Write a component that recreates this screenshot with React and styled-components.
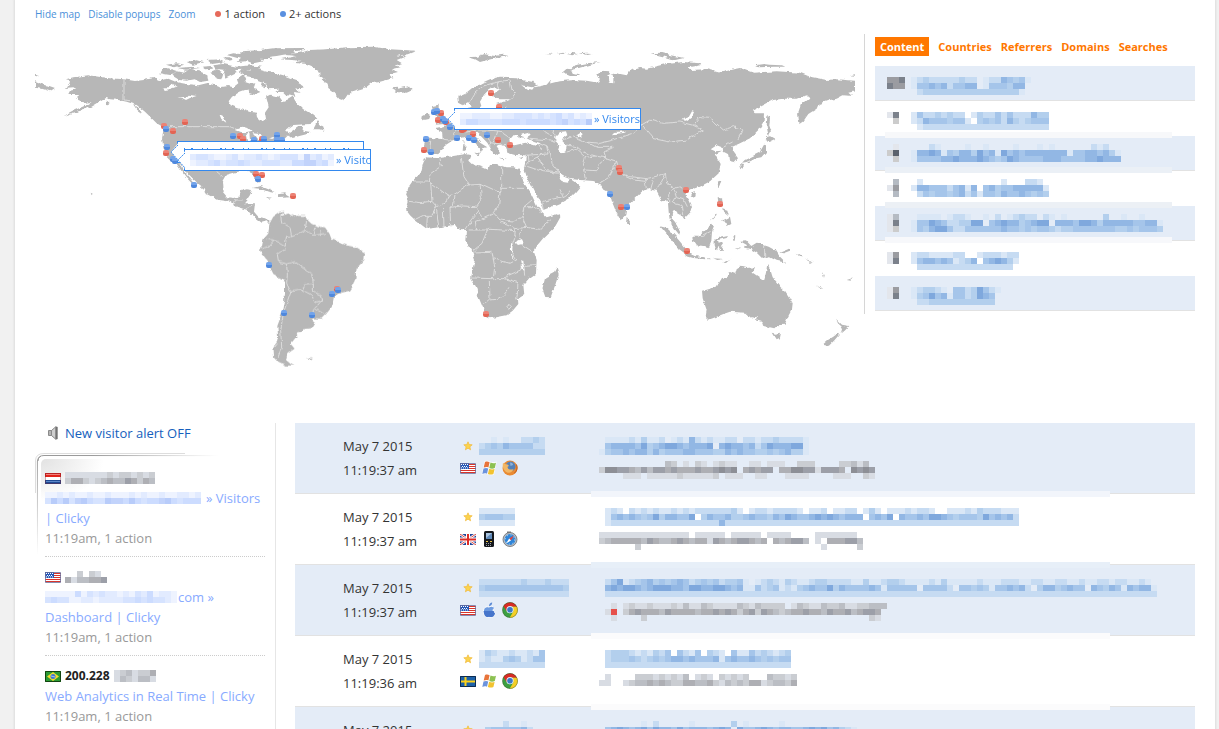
import React from 'react';
import styled, { createGlobalStyle, css } from 'styled-components';

const colors = {
  page: '#f1f1f1',
  surface: '#ffffff',
  band: '#e4ecf7',
  line: '#e2e2e2',
  text: '#333333',
  muted: '#999999',
  link: '#4a90d9',
  linkStrong: '#1560bd',
  linkSoft: '#88aaff',
  accent: '#ff7700',
  popup: '#3388ee',
  land: '#b7b7b7',
  border: '#e4e4e4',
};

const GlobalStyle = createGlobalStyle`
  html {
    scrollbar-width: none;
  }

  body {
    margin: 0;
    background: ${colors.page};
    color: ${colors.text};
    font-family: 'Trebuchet MS', 'Open Sans', sans-serif;
    font-size: 13px;
    line-height: 20px;
  }

  a {
    text-decoration: none;
  }
`;

// Page frame
const Page = styled.main`
  margin: 0 4px 0 15px;
  padding: 0 20px;
  background: ${colors.surface};
  box-shadow: 0 0 2px 1px #dcdcdc;
`;

// Toolbar above the map
const Toolbar = styled.nav`
  display: flex;
  align-items: center;
  gap: 8px;
  padding: 4px 0 10px;
  font-size: 10px;
`;

const ToolLink = styled.a`
  color: ${colors.link};
`;

const Legend = styled.span`
  display: flex;
  align-items: center;
  gap: 3px;
  margin-left: ${({ $first }) => ($first ? '12px' : '7px')};
  font-size: 11px;
`;

const LegendDot = styled.i`
  width: 6px;
  height: 6px;
  border-radius: 3px;
  background: ${({ $red }) => ($red ? '#e66a5b' : '#5a90e0')};
`;

// Map and ranking panel
const Overview = styled.section`
  display: flex;
  align-items: flex-start;
  margin-bottom: 49px;
`;

const MapFrame = styled.div`
  position: relative;
  flex: 1;
  min-width: 0;
`;

const MapSvg = styled.svg`
  display: block;
  width: 100%;
  height: auto;
`;

const Popup = styled.div`
  position: absolute;
  left: ${({ $x }) => ($x / 820) * 100}%;
  top: ${({ $y }) => ($y / 340) * 100}%;
  width: 180px;
  height: 20px;
  display: flex;
  align-items: center;
  gap: 2px;
  padding-left: 5px;
  border: 1px solid ${colors.popup};
  background: ${colors.surface};
  font-size: 11px;
  white-space: nowrap;
`;

const PopupLink = styled.a`
  flex: 1;
  overflow: hidden;
  color: ${colors.popup};
`;

const Pointer = styled.svg`
  position: absolute;
  left: -8px;
  top: -1px;
`;

const Panel = styled.aside`
  width: 320px;
  height: 277px;
  margin-left: 9px;
  padding: 3px 0 0 10px;
  border-left: 1px solid #d6d6d6;
`;

const Tabs = styled.div`
  display: flex;
  gap: 9px;
  margin-bottom: 10px;
`;

const Tab = styled.button`
  border: 0;
  padding: 0;
  background: none;
  color: ${colors.accent};
  font: bold 11px/19px 'Trebuchet MS', 'Open Sans', sans-serif;
  cursor: pointer;

  ${({ $active }) =>
    $active &&
    css`
      padding: 0 5px;
      background: ${colors.accent};
      color: ${colors.surface};
    `}
`;

const RankList = styled.ul`
  margin: 0;
  padding: 0;
  list-style: none;
`;

const RankItem = styled.li`
  position: relative;
  display: flex;
  align-items: center;
  height: 34px;
  padding-left: 12px;
  border-bottom: 1px solid transparent;

  &:nth-child(odd) {
    border-color: ${colors.line};
    background: ${colors.band};
  }

  &::after {
    content: '';
    position: absolute;
    z-index: 1;
    left: 10px;
    right: 23px;
    bottom: -3px;
    height: 6px;
    background: ${({ $smudge }) => $smudge || 'transparent'};
  }
`;

const RankCount = styled.span`
  display: flex;
  width: 24px;
`;

// Lower half: visitor feed and action log
const Activity = styled.section`
  display: flex;
  align-items: stretch;
`;

const Feed = styled.aside`
  box-sizing: border-box;
  flex: 0 0 241px;
  padding: 0 10px;
  border-right: 1px solid #e6e6e6;
`;

const AlertButton = styled.button`
  display: flex;
  align-items: center;
  gap: 4px;
  margin-bottom: 15px;
  padding: 0;
  border: 0;
  background: none;
  color: ${colors.linkStrong};
  font: 13px/20px 'Trebuchet MS', 'Open Sans', sans-serif;
  cursor: pointer;
`;

const Visitor = styled.article`
  position: relative;
  padding: 10px 0 8px;
  border-bottom: 1px dotted #cccccc;
`;

const VisitorGlow = styled.svg`
  position: absolute;
  left: -10px;
  top: -5px;
`;

const VisitorLine = styled.div`
  position: relative;
  display: flex;
  align-items: center;
  gap: ${({ $gap }) => $gap || 5}px;
  height: 20px;
  color: ${colors.muted};
  font-size: 13px;
  white-space: nowrap;
`;

const VisitorLink = styled.a`
  color: ${colors.linkSoft};
`;

const Address = styled.strong`
  color: #222222;
  font-size: 12px;
`;

const Log = styled.table`
  flex: 1;
  align-self: flex-start;
  width: 0;
  margin-left: 19px;
  border-collapse: collapse;
  table-layout: fixed;
`;

const LogRow = styled.tr`
  &:nth-child(odd) {
    background: ${colors.band};
  }
`;

const LogCell = styled.td`
  position: relative;
  width: ${({ $width }) => $width || 'auto'};
  padding: 11px 0 11px ${({ $indent }) => $indent || 0}px;
  border-bottom: 1px solid ${colors.line};
  line-height: 24px;
  vertical-align: top;

  &::after {
    content: '';
    position: absolute;
    z-index: 1;
    left: -8px;
    right: 85px;
    bottom: -4px;
    height: 6px;
    background: ${({ $smudge }) => $smudge || 'transparent'};
  }
`;

const LogLine = styled.div`
  display: flex;
  align-items: center;
  gap: ${({ $star }) => ($star ? 6 : 5)}px;
  height: ${({ $icons }) => ($icons ? 20 : 24)}px;
  padding-left: ${({ $star }) => ($star ? '3px' : 0)};
`;

/* Pixelated stand-in for private text, one digit per 6px cell */
const tones = {
  blue: ['none', '#dae7f6', '#c6dbf2', '#b3cfed', '#a5c5ea', '#92b7e4', '#7fa8dd'],
  grey: ['none', '#d8dce3', '#cacdd2', '#bbbec4', '#aeafb4', '#9c9fa8', '#8d8f96'],
  pale: ['none', '#eef3ff', '#e2ebff', '#d6e3ff', '#ccdcff', '#c2d3fb', '#b8ccfa'],
  dark: ['none', '#e3e6ec', '#cccccc', '#b5bbc3', '#9b9ca1', '#7b818b', '#5c626c'],
};

const MosaicSvg = styled.svg`
  flex: none;
`;

const Mosaic = ({ rows, tone = 'blue', accent }) => (
  <MosaicSvg
    width={rows[0].length * 6}
    height={rows.length * 6}
    shapeRendering="crispEdges"
    aria-hidden="true"
  >
    {rows.map((row, y) =>
      [...row].map((cell, x) =>
        cell === '0' ? null : (
          <rect
            key={`${x}-${y}`}
            x={x * 6}
            y={y * 6}
            width="6"
            height="6"
            fill={cell === 'r' ? accent : tones[tone][cell]}
          />
        )
      )
    )}
  </MosaicSvg>
);

// Flags, 16 x 11
const Flag = ({ country }) => (
  <svg width="16" height="11" viewBox="0 0 16 11" role="img" aria-label={country}>
    {country === 'Netherlands' && (
      <>
        <path fill="#e2231a" d="M0 0h16v4H0z" />
        <path fill="#fff" d="M0 4h16v3H0z" />
        <path fill="#1d4a94" d="M0 7h16v4H0z" />
        <path stroke="#f0827c" d="M1 1.500h14" />
        <path stroke="#5c85c6" d="M1 8.500h14" />
        <path fill="none" stroke="#7a2030" strokeOpacity=".4" d="M.5.5h15v10H.5z" />
      </>
    )}
    {country === 'United States' && (
      <>
        <path fill="#fff" d="M0 0h16v11H0z" />
        <path stroke="#d8352c" d="M0 1.500h16M0 3.500h16M0 5.500h16M0 7.500h16M0 9.500h16" />
        <path fill="#2458b8" d="M0 0h9v6H0z" />
        <path stroke="#fff" strokeDasharray="1 1" d="M1 1.500h7M2 3.500h6M1 4.900h7" />
        <path fill="none" stroke="#6a6f9c" strokeOpacity=".8" d="M.5.5h15v10H.5z" />
      </>
    )}
    {country === 'Brazil' && (
      <>
        <path fill="#2a9a34" d="M0 0h16v11H0z" />
        <path fill="#f4dc2d" d="M8 1l6 4.500-6 4.500-6-4.500z" />
        <circle cx="8" cy="5.500" r="2.500" fill="#3e76cf" />
        <path stroke="#cfe4ff" strokeWidth=".7" d="M6 5l4 1" />
        <path fill="none" stroke="#12440f" d="M.5.5h15v10H.5z" />
      </>
    )}
    {country === 'United Kingdom' && (
      <>
        <path fill="#23479b" d="M0 0h16v11H0z" />
        <path stroke="#fff" strokeWidth="2.400" d="M0 0l16 11M16 0L0 11" />
        <path stroke="#d8352c" strokeWidth=".9" d="M0 0l16 11M16 0L0 11" />
        <path stroke="#fff" strokeWidth="4" d="M8 0v11M0 5.500h16" />
        <path stroke="#dd2c26" strokeWidth="2" d="M8 0v11M0 5.500h16" />
      </>
    )}
    {country === 'Sweden' && (
      <>
        <path fill="#1d61a8" d="M0 0h16v11H0z" />
        <path stroke="#fdd21a" strokeWidth="2" d="M5.500 0v11M0 5.500h16" />
        <path fill="none" stroke="#0d2c52" d="M.5.5h15v10H.5z" />
      </>
    )}
  </svg>
);

// Operating system and browser badges, 16 x 16
const SystemIcon = ({ name }) => (
  <svg width="16" height="16" viewBox="0 0 16 16" role="img" aria-label={name}>
    {name === 'Windows' && (
      <>
        <path fill="#fff" fillOpacity=".8" d="M3.500 1C6 .4 8 1 9 1.600c2 .8 4 .6 6.800-.2L13 14.500c-2 1.200-4.500 1-6.500 0-2-.8-4-.5-6 .5z" />
        <path fill="#e8743b" d="M4 2c1.700-.7 3-.5 4.600.2L7.400 7.600C6 6.900 4.500 7 2.700 7.600z" />
        <path fill="#8cc152" d="M9.500 2.600c2 .8 3.700.8 5.500.1l-1.200 5.400c-2 .8-3.800.7-5.500-.1z" />
        <path fill="#6b93dd" d="M2.500 8.500c2-.8 3.200-.7 4.700-.1l-1.200 5.400c-1.600-.7-2.800-.6-4.700.1z" />
        <path fill="#f2c330" d="M8.100 8.800c2 .8 3.700.9 5.500.2l-1.200 5c-2 .9-3.800.7-5.500-.1z" />
      </>
    )}
    {name === 'Mobile' && (
      <>
        <rect x="3" y="0" width="10" height="16" rx="1.500" fill="#15181d" />
        <path fill="#5e88b8" d="M5 2h6v6H5z" />
        <path fill="#a9c4e0" d="M5 2h6L5 7z" />
        <path stroke="#e8c44a" d="M5 10.500h2M9 10.500h2" />
        <path stroke="#9ba1a8" strokeDasharray="1 1" d="M5 12.500h6M5 14.500h6" />
      </>
    )}
    {name === 'Apple' && (
      <>
        <path
          fill="#6d9be0"
          stroke="#fff"
          d="M8 5c1-.7 4.200-1.300 5.500 1-2.300 1.700-1.500 4.500.6 5.400C13 14.500 11.300 16 8.300 14.800 5.500 16 4 14.500 3 12.300 1.500 8.500 3 3.500 8 5z"
        />
        <path fill="#5b8ad6" d="M8 4.200C8 2 9.400.8 11.200.6 11.200 2.600 10 4 8 4.200z" />
        <path fill="#4675cb" d="M2.600 9h10.200c.1 1.200.5 2 1.300 2.400-1 2.800-3 4.400-6.200 3.400C5 16 3 13.500 2.600 9z" />
      </>
    )}
    {name === 'Firefox' && (
      <>
        <circle cx="8" cy="8" r="7.500" fill="#e98b33" />
        <circle cx="8.500" cy="6.500" r="5" fill="#5581b8" />
        <path fill="#8fb3d8" d="M8 2.500c2 0 3 1 3 2.500L8.500 6z" />
        <path fill="#f2b765" d="M1 3c1 .3 1.500 1 3 1.200C5.500 4 6.500 5 7 6 5 6.500 5.300 8 6.500 9c1.500 1 3.500.5 5 0-1 4-6 5-8.500 2S.5 6 1 3z" />
        <path fill="none" stroke="#bf5a1c" d="M14.500 4.500c1.300 3 .5 6.500-2 8.600" />
      </>
    )}
    {name === 'Safari' && (
      <>
        <path stroke="#777" strokeWidth="2" d="M5 1.500h4" />
        <circle cx="8" cy="8.500" r="7" fill="#b9bec4" stroke="#676c72" strokeWidth=".8" />
        <circle cx="8" cy="8.500" r="5.400" fill="#2f85d8" />
        <path fill="#e7413a" d="M12 4.500L9 9.600 7.200 7.600z" />
        <path fill="#fff" d="M4 12.500l3.200-4.900L9 9.600z" />
        <circle cx="8" cy="8.500" r="4.600" fill="none" stroke="#bfe0fb" strokeDasharray="1 2.600" />
      </>
    )}
    {name === 'Chrome' && (
      <>
        <circle cx="8" cy="8" r="7.700" fill="#3c9f41" />
        <path fill="#d92b24" d="M1.500 4A7.700 7.700 0 0 1 14.900 4.700L8 4.700 4.600 9z" />
        <path fill="#f5cf26" d="M15 4.800A7.700 7.700 0 0 1 7.600 15.700L11.300 9.500 10 4.700z" />
        <circle cx="8" cy="7.700" r="3.600" fill="#e9f0f7" />
        <circle cx="8" cy="7.700" r="2.800" fill="#3c78c6" />
        <circle cx="8" cy="8" r="7.500" fill="none" stroke="#3b2a18" strokeOpacity=".35" strokeWidth=".8" />
      </>
    )}
  </svg>
);

const Star = () => (
  <svg width="10" height="10" viewBox="0 0 10 10" aria-hidden="true">
    <path
      fill="#fbd34d"
      stroke="#f0b93c"
      strokeWidth=".7"
      d="M5 .8l1.200 2.700 3 .3-2.300 2 .7 3L5 7.200 2.400 8.800l.7-3-2.300-2 3-.3z"
    />
  </svg>
);

const SpeakerIcon = () => (
  <svg width="16" height="14" viewBox="0 0 16 14" aria-hidden="true">
    <path fill="#b4b4b4" stroke="#8a8a8a" d="M3.500 4.500H7v5H3.500z" />
    <path fill="#cfcfcf" stroke="#8a8a8a" d="M6.500 4.500l4-3.500v12l-4-3.500z" />
    <path fill="#8f8f8f" d="M10 .5h2.200v13H10z" />
    <path stroke="#555" d="M12 1v12" />
  </svg>
);

/* World map drawing */
const americas = [
  // mainland
  'M150 241L138 238 160 232 205 226 262 234 312 238 345 243 372 240 405 233 420 240 445 236 470 247 500 252 535 256 560 250 585 256 600 262 625 258 640 262 655 250 650 236 668 224 680 232 672 246 690 252 706 250 700 268 675 270 660 275 636 290 626 304 632 316 655 325 690 336 712 338 714 352 728 364 738 356 735 338 746 322 742 304 738 290 750 284 778 290 788 304 806 298 818 290 832 312 850 328 880 346 892 356 868 372 820 375 795 392 808 398 838 378 852 378 850 392 872 396 862 402 838 408 818 414 806 404 790 420 772 428 765 440 745 458 738 480 722 494 708 508 712 524 720 545 712 548 700 528 692 514 668 512 640 518 618 524 606 545 608 575 622 592 640 594 655 590 660 574 680 568 696 570 690 585 680 600 672 610 705 610 702 635 715 650 735 655 748 662 748 674 740 664 725 668 695 645 682 630 650 620 630 605 595 600 555 580 552 566 530 550 505 525 490 500 478 488 490 512 520 548 518 553 495 528 470 492 460 485 440 465 430 440 426 415 430 395 428 380 410 370 395 355 375 335 350 315 320 305 295 300 270 298 258 294 240 305 215 320 190 330 160 338 130 349 165 330 200 315 215 306 195 308 175 300 168 290 178 282 145 282 150 272 170 268 160 262 134 264 148 254z',
  // arctic islands
  'M425 208L445 205 470 213 455 226 418 220z',
  'M455 226L470 214 490 218 505 209 535 214 562 226 565 242 540 246 524 238 500 242 478 240z',
  'M570 216l20-8 20 10-6 20-16-2zM612 210l30-4 10 12-20 10-16 8z',
  'M656 214L672 206 690 210 700 204 740 215 762 218 790 226 812 234 830 240 835 252 852 262 828 266 842 278 822 276 826 290 800 286 790 276 766 276 778 266 745 268 738 252 715 244 700 232 680 228z',
  'M620 165L640 160 660 162 668 154 720 150 760 145 850 144 856 150 820 154 826 160 790 164 770 168 748 170 756 178 720 176 730 184 700 190 680 184 650 186 660 176z',
  'M580 196l30-4 40 8 40-4 36 4-20 8-50 2-40 0-30-4z',
  'M438 194l32-4 20 4-28 8zM500 186l30-5 20 6-30 8zM560 180l40-2 16 8-40 6zM470 204l50-4 20 4-40 5zM545 200l30-2 4 8-24 2zM610 172l20 0 8 8-18 2z',
  'M690 262l20 4 14 10-20 8-20-6zM725 250l12 4-4 8-10-4z',
  // Greenland
  'M780 178L810 172 830 168 796 165 850 156 868 150 920 148 980 142 1060 140 1110 148 1187 152 1150 160 1130 166 1160 168 1130 180 1146 190 1124 196 1142 202 1116 208 1134 216 1110 222 1120 235 1080 245 1054 250 1040 260 1000 272 985 285 975 301 955 294 940 275 925 264 922 250 905 242 914 234 895 228 902 220 888 214 880 200 860 192 820 188 845 182z',
  'M1116 262L1130 260 1134 266 1165 259 1178 266 1165 274 1145 278 1124 274 1132 270z',
  'M45 244L75 256 88 258 105 264 90 274 66 266 45 263zM45 225l12 2-12 2z',
  'M880 388L892 364 898 376 908 378 913 392 898 388z',
  // Caribbean
  'M698 564L720 558 745 568 768 580 745 575 720 566z',
  'M774 583L795 580 810 589 790 590 774 591zM742 591l14 2-10 3z',
  'M212 578l6 3-3 5zM185 568l5 2zM855 600l3 10z',
  'M258 306l12-4 2 8-14 6zM340 312l16 12 10 16-14-10z',
];

const southAmerica = [
  'M418 132L430 110 448 99 460 95 455 108 475 100 490 108 525 108 532 120 545 132 560 138 585 142 598 160 605 178 625 185 650 196 680 202 705 218 703 240 680 265 676 295 668 320 660 332 636 338 615 350 610 375 590 400 575 416 550 415 545 420 556 430 550 440 520 445 518 458 500 460 503 472 495 475 482 492 494 506 472 522 468 540 480 550 498 556 470 557 445 545 432 530 430 500 440 488 444 470 442 435 455 400 465 345 465 302 430 282 412 245 390 215 396 198 400 178 415 160z',
  'M528 534l18-2-6 6zM686 550l12 5zM318 180l8 2z',
];

const oldWorld = [
  // Eurasia
  'M78 322L128 328 126 306 104 294 122 292 135 288 150 275 170 262 200 250 214 246 205 234 222 228 230 246 262 246 295 240 305 228 288 222 320 212 332 208 300 208 282 206 280 192 300 178 284 172 266 180 252 194 240 215 244 228 230 240 215 232 208 216 188 226 174 218 172 202 200 190 222 172 246 158 270 148 300 140 350 142 366 150 400 156 414 166 396 172 364 166 384 180 400 182 404 172 440 164 452 150 456 160 480 154 520 150 560 152 594 158 600 148 592 132 606 122 628 124 622 138 630 158 640 160 640 146 632 134 650 130 680 136 690 122 720 114 740 116 800 102 850 96 900 100 904 106 866 112 868 120 920 118 960 128 1000 118 1020 114 1060 128 1130 124 1200 128 1230 140 1280 150 1310 148 1365 152 1365 184 1345 188 1356 198 1330 196 1310 206 1290 210 1256 222 1250 236 1225 252 1210 274 1198 282 1194 250 1202 226 1228 206 1222 196 1204 200 1190 206 1150 206 1120 210 1090 226 1056 244 1065 250 1095 250 1094 270 1075 300 1050 325 1020 340 994 352 1002 368 1014 385 1004 396 990 392 988 374 972 366 966 352 950 346 932 358 946 364 966 362 946 372 954 388 962 402 956 430 930 454 900 470 880 478 862 484 856 494 868 510 876 528 870 548 852 566 845 556 832 548 824 536 816 548 815 568 830 585 840 605 838 617 824 600 810 575 806 545 804 520 798 510 785 515 780 500 770 482 756 480 745 474 725 485 700 510 680 530 676 555 662 571 650 550 636 515 630 490 622 484 608 476 598 460 580 453 540 450 512 447 495 440 478 427 476 436 486 456 500 458 512 448 524 456 541 470 525 490 512 502 480 520 430 540 420 518 400 480 380 440 372 414 376 392 378 376 345 375 322 368 318 348 298 344 290 352 300 366 292 376 280 370 270 352 262 338 246 322 232 308 218 312 226 320 240 338 262 352 250 354 248 364 238 368 240 356 222 334 205 320 190 322 172 326 160 330 136 346 128 358 115 369 90 373 74 362 72 345z',
  // islands around Europe
  'M96 228L116 224 116 236 126 246 138 264 142 272 136 282 104 284 112 276 106 268 114 262 102 248z',
  'M68 256L82 248 92 254 88 266 66 271z',
  'M206 82L230 80 250 72 284 78 310 74 326 78 290 84 262 90 240 96 226 88z',
  'M486 128L500 116 514 118 526 106 560 100 602 96 550 110 514 120 520 132 544 138 510 138z',
  'M752 70L784 68 812 76 852 84 826 90 800 82z',
  'M438 72l14-2 6 4zM470 71l20-3 4 4zM500 72l20-4 10 4-10 4zM536 70l24-2 18 1-20 5z',
  'M1064 106L1090 102 1108 104 1146 106 1156 110 1120 110 1076 112zM1350 136l15-3v4z',
  'M0 66l20-4 28 2-20 8-28 4zM0 174l30-2 8 8-18 8-20-2z',
  'M190 342l6 2 0 18-8 0zM190 330l4 2-2 8zM226 368l14 0-4 8zM296 386l24 2-10 3zM356 384l12-4-6 7z',
  // Japan and Sakhalin
  'M1102 254L1110 266 1108 288 1116 300 1106 318 1100 290z',
  'M1098 322L1112 318 1126 326 1106 336 1094 334z',
  'M1092 344L1098 346 1098 366 1084 382 1060 386 1040 396 1026 398 1034 390 1058 378 1078 368z',
  'M1020 400l12 2-4 14-6-4zM1042 396l10-2-6 8zM958 452l6 4-8 18-6-10zM874 490l14-3-2 10-10 4z',
  'M680 560L690 575 686 586 678 584z',
  // Africa
  'M78 382L115 385 160 378 198 372 212 375 205 392 215 402 245 412 262 420 270 402 290 402 320 412 345 412 360 418 357 430 374 462 395 495 412 530 430 552 440 562 480 550 481 562 465 590 430 624 412 646 402 666 410 690 408 730 388 744 370 765 373 795 354 808 355 822 338 842 320 856 290 862 265 865 252 858 250 836 235 800 228 770 213 745 220 710 225 690 215 660 196 632 198 600 172 594 165 584 120 592 80 596 45 570 30 556 18 540 26 512 18 495 26 470 40 450 62 430 70 398z',
  'M470 712L476 732 466 764 452 802 436 801 427 776 436 742 460 730z',
];

const oceania = [
  'M660 169L680 174 700 192 716 210 736 234 732 248 716 236 692 206z',
  'M732 249L752 252 764 258 794 262 796 268 760 264 738 258zM800 266l12-2-4 4zM820 265l32 2-20 3zM850 278l18-10 6-2-16 13z',
  'M757 200L775 200 800 178 812 160 822 170 816 186 814 212 806 232 794 228 768 226 760 214z',
  'M824 206L846 202 864 198 860 204 834 210 836 218 850 214 840 228 850 242 842 242 836 230 830 244 824 226z',
  'M833 82L846 82 848 108 836 106z',
  'M842 116l20 6 4 14-10-8zM846 152l24-12 4 22-12 6-2-12zM812 152l16-22 2 4z',
  'M898 212L918 211 926 220 934 228 950 218 986 230 1008 242 1018 258 1038 278 1010 272 990 262 968 266 950 248 930 236 912 232 922 226z',
  'M1018 248L1044 238 1050 234 1050 242 1030 250zM1070 248l14 8 4 4-8-2zM1092 262l26 16-6 0zM880 196l6 0-2 22zM884 234l20 2-8 3z',
  'M834 34l8 2-6 18-4-8zM1130 346l20 14-8-2zM1220 330l12-4 6-6-6 12zM1148 306l6 10-2 8zM388 352l4 2zM376 121l8 0z',
  // Australia
  'M786 362L830 350 846 324 862 322 870 306 886 312 890 298 902 290 918 294 945 292 938 308 958 322 972 330 978 308 982 282 990 296 998 322 1008 334 1022 352 1036 364 1048 382 1058 400 1056 418 1044 440 1034 464 1010 466 1000 475 970 468 964 452 948 448 952 438 936 446 916 428 870 425 850 432 830 440 806 449 797 440 800 420 788 385z',
  'M998 488L1010 491 1023 488 1020 503 1010 508z',
  'M1188 446L1200 458 1206 464 1228 468 1214 482 1202 492 1206 478z',
  'M1196 488L1196 496 1182 512 1166 528 1148 524 1164 510 1180 500z',
];

const americasBorders =
  'M312 238L312 300 330 302M428 380H630L650 388M466 486L500 496 530 494 556 512 580 506 608 530M640 620L648 600 668 600M700 615L676 628';
const southBorders =
  'M452 103L455 130 480 140 485 170 510 160 525 150 530 122M410 178L432 180 465 200 470 168 485 170M396 206L415 200 432 180M468 205L442 225 445 245 470 252 472 285 470 310 482 335 470 370 460 400 452 450 455 500 445 530M470 252L495 245 520 265 545 280 550 310 525 312 517 330 482 335M517 330L545 345 555 368 575 362 572 345 550 335 550 310M575 362L550 390 548 410M556 386L582 402M525 150L545 165 560 165 588 160M555 140L550 162M575 142L572 164';
const oldBorders =
  'M208 216L224 190 250 168 290 156 330 150M290 156L296 176M330 150L336 180 346 190 332 208M128 328L160 332M150 276L170 296 160 316 172 326M76 332L92 334 88 368M170 296L200 306 232 300 262 300M200 250L206 290M262 246L268 282 300 290M300 240L330 250 350 268 420 286 436 306 456 318M262 300L300 304 330 324M265 312L270 350M270 338L316 344M290 304L280 336M320 230L318 250 350 268M420 342L440 350 444 372 372 376M390 325L450 330 466 334M412 340L425 360M382 376L384 396 372 412M384 396L410 382 430 372M410 382L440 422 476 426M384 410L430 425 476 430M440 350L452 372 456 400 476 426M430 540L425 515 490 500 512 486M490 500L480 478M466 316L450 290 500 262 560 270 620 258 660 258 690 280 726 284M500 345L530 350 550 366 586 378M486 330L520 318 560 336 600 340 640 330 700 310 726 284M500 366L530 358 556 382 550 410 556 450M586 378L556 382M550 420L590 422 600 400 620 384 586 378M560 336L590 352 640 352 612 366 618 384M620 384L650 394 660 430 690 440 740 446 780 436 796 430M598 460L630 440 640 410 650 394M660 432L700 450 736 454 740 446M736 456L740 478M760 450L752 478M796 430L780 466 770 480M796 430L800 460 820 476 806 494 806 520M820 476L840 470 856 482M820 476L830 500 850 506 862 530M826 500L816 520 846 526 852 560M726 284L750 270 790 280 840 276 880 286 910 300 860 330 810 336 760 326 726 284M880 286L900 260 930 262 970 300 1000 290 1030 298 1012 330M966 352L998 336M120 385L124 408 90 432 88 456 40 456M88 456L145 498 165 492 206 462 192 440 188 414 184 380M206 462L240 460 300 488 305 475 305 410M305 475H374M300 488L296 526 280 548 300 570M240 460L244 504 226 530 236 546M92 458L96 514 60 518 30 514M145 498L140 514 110 530 96 514M110 530L96 556 70 556 46 568M165 498L160 524 150 532 152 590M150 532L190 528 226 530M130 536L132 592M110 540L116 592M82 558L80 594M236 546L216 570 198 598M236 546L250 566 226 574 230 600M250 566L280 552M300 570L340 576 366 560 372 530 396 510M372 530L400 530 432 552M366 560L380 592 420 598 456 566 M300 576L346 596 380 592M346 596L344 622M206 600H262L270 598 346 602M262 600L246 640 220 662M344 622L338 640 336 668 350 690 330 700 280 686 276 664 220 666M362 602L360 620M360 640L396 664M336 678L342 690M410 704L374 706M280 686L284 712 280 746 214 744M284 746H310L330 734 362 720 364 700M310 746L330 750 354 758 352 790M268 752L270 806 250 824M270 810L290 808 312 794 330 772M372 706L374 740M352 790L350 808M320 830l8-6 6 6-8 8z';
const lakes = [
  'M644 390L668 380 690 386 698 392 680 396 660 396zM678 402L688 398 690 420 682 426zM700 400L722 402 728 412 712 418 708 408zM716 428l20-6 0 4zM744 416l18-6-2 6z',
  'M598 346L608 350 616 368 604 360zM472 292L500 290 506 284 530 288 510 294 498 300 486 294zM430 262L446 262 456 254 470 260 448 268 434 270z',
];
const inlandSeas = [
  'M328 330L344 312 354 314 356 324 372 326 364 314 386 308 392 314 380 322 400 332 422 340 408 348 376 338 344 346 330 344z',
  'M466 320L480 306 498 304 502 316 490 324 486 332 500 346 497 364 484 370 474 358 478 346 466 332z',
  'M530 316l12-8 6 8-6 6zM634 314l8-8 34-2 0 4-30 4zM842 270L866 262 876 244 882 246 876 260 858 272z',
  'M350 630l10-5 8 5-2 12-12 3-6-6zM332 640l4 0 0 34 5 16-7-14zM364 692l6 0 3 32-6-8z',
];

const redMarkers = [
  [185, 122], [164, 126], [173, 131], [240, 136], [243, 139], [262, 139], [166, 153], [256, 174],
  [262, 175], [293, 196], [424, 150], [491, 93], [499, 107], [441, 113], [438, 120], [446, 122],
  [462, 130], [464, 129], [473, 134], [498, 140], [510, 145], [619, 168], [620, 172], [621, 207],
  [686, 190], [720, 204], [687, 251], [486, 314], [337, 289],
];
const blueMarkers = [
  [166, 129], [167, 147], [173, 159], [175, 161], [233, 136], [254, 140], [264, 139], [277, 135],
  [277, 140], [282, 140], [258, 179], [194, 185], [434, 112], [437, 111], [443, 119], [445, 121],
  [450, 127], [426, 139], [431, 152], [457, 138], [469, 138], [474, 140], [487, 135], [610, 194],
  [627, 207], [269, 265], [338, 290], [332, 294], [284, 313], [312, 315],
];

const Land = ({ shapes, borders, water = [], origin }) => (
  <g transform={`translate(${origin}) scale(.33333)`}>
    {shapes.map((d) => (
      <path key={d} d={d} fill={colors.land} />
    ))}
    {borders && <path d={borders} fill="none" stroke={colors.border} strokeWidth="2.500" strokeLinejoin="round" />}
    {water.map((d) => (
      <path key={d} d={d} fill="#fff" />
    ))}
  </g>
);

const Marker = ({ x, y, fill }) => (
  <rect x={x - 3} y={y - 3} width="6" height="6" rx="2" fill={fill} />
);

const WorldMap = () => (
  <MapSvg viewBox="35 34 820 340" role="img" aria-label="Visitor map">
    <defs>
      <linearGradient id="red" x2="0" y2="1">
        <stop offset=".5" stopColor="#ec8275" />
        <stop offset=".5" stopColor="#e36453" />
      </linearGradient>
      <linearGradient id="blue" x2="0" y2="1">
        <stop offset=".5" stopColor="#72a3ea" />
        <stop offset=".5" stopColor="#4f88dd" />
      </linearGradient>
      {/* ragged coastlines */}
      <filter id="coast" filterUnits="userSpaceOnUse" x="35" y="34" width="820" height="340" colorInterpolationFilters="sRGB">
        <feTurbulence type="fractalNoise" baseFrequency=".16" numOctaves="3" seed="4" />
        <feDisplacementMap in="SourceGraphic" scale="4" xChannelSelector="R" yChannelSelector="G" />
      </filter>
    </defs>
    <g filter="url(#coast)">
      <Land origin="20 0" shapes={americas} borders={americasBorders} water={lakes} />
      <Land origin="130 180" shapes={southAmerica} borders={southBorders} />
      <Land origin="400 30" shapes={oldWorld} borders={oldBorders} water={inlandSeas} />
      <Land origin="440 170" shapes={oceania} borders="M974 228V266M762 198L790 196 812 184" />
    </g>
    {redMarkers.map(([x, y]) => (
      <Marker key={`${x}-${y}`} x={x} y={y} fill="url(#red)" />
    ))}
    {blueMarkers.map(([x, y]) => (
      <Marker key={`${x}-${y}`} x={x} y={y} fill="url(#blue)" />
    ))}
  </MapSvg>
);

const MapPopup = ({ x, y, rows, children }) => (
  <Popup $x={x} $y={y}>
    <Pointer width="9" height="22" viewBox="0 0 9 22" aria-hidden="true">
      <path fill="#fff" d="M9 1L1 11l8 10z" />
      <path fill="none" stroke={colors.popup} strokeDasharray="2 1" d="M8 4L1 11l7 8" />
    </Pointer>
    {rows ? (
      <Mosaic tone="pale" rows={rows} />
    ) : (
      <svg width="176" height="12" viewBox="0 0 176 12" aria-hidden="true">
        <path stroke={colors.popup} strokeDasharray="1 6 2 9 1 4 1 12 2 3" d="M1 2.500h168" />
      </svg>
    )}
    {children && <PopupLink href="#visitors">{children}</PopupLink>}
  </Popup>
);

const tabs = ['Content', 'Countries', 'Referrers', 'Domains', 'Searches'];

const ranking = [
  {
    count: ['000', '445', '544', '000'],
    label: ['00000000000000000000', '12322222322012254341', '14454524455014443550', '02333333333333333310'],
  },
  {
    count: ['00', '15', '02', '00'],
    label: ['00000000000000000000000', '14223232201322424222533', '12544434410343425323444', '01222222222222222222222'],
    smudge: '#f7f8fa',
  },
  {
    count: ['01', '26', '02'],
    label: ['00021000010010000100010100000021200', '15565143553645164545555555144554531', '14444556555654346544445554444556555'],
    smudge: '#ebf0f6',
  },
  {
    count: ['03', '14', '03'],
    label: ['01000000000000010002210', '15544424515045344555551', '02434434524144354454343'],
    smudge: '#ecf0f5',
  },
  {
    count: ['13', '15', '12'],
    label: ['011110122100102012322021010000003001001000', '144654223366045655345660555466535555544551', '143566422444444544343443233444444433434443'],
    smudge: '#f7f8fb',
  },
  {
    count: ['00', '14', '15', '00'],
    label: ['000000000000000000', '122111122001222122', '145545412350456531', '022222222222222220'],
  },
  {
    count: ['00', '14', '15', '00'],
    label: ['000000000000000', '123321044236421', '134645144236540', '022333333333330'],
  },
];

const log = [
  {
    time: '11:19:37 am',
    name: ['00101002232', '23435444422', '33333333333'],
    icons: ['United States', 'Windows', 'Firefox'],
    page: ['01111213112012152121122022122322221', '04555546345665455560565545246555661', '13445455353444554443354544334345331'],
    source: ['00000000000320102101211001101110022200002231300', '26655435355454445445656045455044665515554065650', '00001110111112111112011100110001111000011100210'],
    smudge: '#f2f5fb',
  },
  {
    time: '11:19:37 am',
    name: ['111111', '344433', '111111'],
    icons: ['United Kingdom', 'Mobile', 'Safari'],
    page: ['0121021212112121222222310122122221011201122013101112122100111213222111', '0145454346355446035445334544354654456565455504546054454665434443645452', '0122222222222222222252222222222222222222222222222222222222222222222222'],
    source: ['11111111111111101111101111101111000011111110', '23444443543345434415434554340434553010444553', '00000020000000000000000000000000000001000002'],
    smudge: '#e7eff8',
  },
  {
    time: '11:19:37 am',
    name: ['222222232223222', '344444444444443', '222222222222222'],
    icons: ['United States', 'Apple', 'Chrome'],
    page: [
      '024612345343454234342334101232132112332222113112332111121311111211122211221122112112212211210',
      '056566545666554665566545114234121345446354444541444440444420443431445452035534544054354154551',
      '022222222222222222222222222222222222222222222222222222222222222222222222222222222222222222222',
    ],
    source: ['001012112111213113211113213222201321132231122333', '01r024544435444434454542452543234454435445345540', '001000020000000000000000000000000000000000000210'],
    accent: '#e6504a',
    smudge: '#fbfbfc',
  },
  {
    time: '11:19:36 am',
    name: ['13211211214', '12113431244', '22222222222'],
    icons: ['Sweden', 'Windows', 'Chrome'],
    page: ['02333212132404214032104114232123', '02333432343455454445145445434344', '02222222222222222222222222222222'],
    source: ['010000222121213012102121200032212', '110012334343224433421323244123324', '000000000000000000000000000000000'],
    smudge: '#fbfbfc',
  },
  {
    time: '11:19:36 am',
    name: ['000020010', '034444452', '033333333'],
    icons: ['United States', 'Windows', 'Chrome'],
    page: ['0000000102000001000000301000001000000000000', '0456545646554645554565064456545544565645321', '0222222222222222222222222222222222222222220'],
    source: ['00112112', '34544343', '00100100'],
  },
];

const App = () => (
  <>
    <GlobalStyle />
    <Page>
      <Toolbar>
        <ToolLink href="#hide">Hide map</ToolLink>
        <ToolLink href="#popups">Disable popups</ToolLink>
        <ToolLink href="#zoom">Zoom</ToolLink>
        <Legend $first>
          <LegendDot $red />1 action
        </Legend>
        <Legend>
          <LegendDot />2+ actions
        </Legend>
      </Toolbar>

      <Overview>
        <MapFrame>
          <WorldMap />
          <MapPopup x={142} y={107} />
          <MapPopup x={149} y={115} rows={['233211231223212333152312', '122342334322333224455341']}>
            » Visitors
          </MapPopup>
          <MapPopup x={419} y={74} rows={['1122211223332323423121', '2443333444344443453436']}>
            » Visitors
          </MapPopup>
        </MapFrame>

        <Panel>
          <Tabs>
            {tabs.map((tab, index) => (
              <Tab key={tab} type="button" $active={index === 0}>
                {tab}
              </Tab>
            ))}
          </Tabs>
          <RankList>
            {ranking.map(({ count, label, smudge }, index) => (
              <RankItem key={index} $smudge={smudge}>
                <RankCount>
                  <Mosaic tone="dark" rows={count} />
                </RankCount>
                <Mosaic rows={label} />
              </RankItem>
            ))}
          </RankList>
        </Panel>
      </Overview>

      <Activity>
        <Feed>
          <AlertButton type="button">
            <SpeakerIcon />
            New visitor alert OFF
          </AlertButton>

          <Visitor>
            <VisitorGlow width="210" height="104" viewBox="0 0 210 104" aria-hidden="true">
              <defs>
                <linearGradient id="fadeRight">
                  <stop offset=".3" stopColor="#999" />
                  <stop offset="1" stopColor="#999" stopOpacity="0" />
                </linearGradient>
                <linearGradient id="fadeDown" x2="0" y2="1">
                  <stop offset="0" stopColor="#999" />
                  <stop offset="1" stopColor="#999" stopOpacity="0" />
                </linearGradient>
                <radialGradient id="glow" cx="0" cy="0" r="1">
                  <stop offset="0" stopColor="#e2e2e2" />
                  <stop offset=".7" stopColor="#fff" />
                </radialGradient>
              </defs>
              <rect x="6" y="6" width="90" height="60" rx="5" fill="url(#glow)" />
              <path fill="none" stroke="url(#fadeRight)" d="M3 8Q3 2.500 9 2.500L183 2.600" />
              <path fill="none" stroke="url(#fadeDown)" d="M2.500 102L2.400 8Q3 4 6 3" />
              <path fill="none" stroke="#ddd" d="M.5 40V8Q.5.5 9 .5H150" />
            </VisitorGlow>
            <VisitorLine $gap={4}>
              <Flag country="Netherlands" />
              <Mosaic tone="grey" rows={['111111121221212', '244212343354243']} />
            </VisitorLine>
            <VisitorLine>
              <Mosaic tone="pale" rows={['11212112112111212112112212', '36463564336554643445643444']} />
              <VisitorLink href="#visitors">» Visitors</VisitorLink>
            </VisitorLine>
            <VisitorLine>
              <VisitorLink href="#clicky">| Clicky</VisitorLink>
            </VisitorLine>
            <VisitorLine>11:19am, 1 action</VisitorLine>
          </Visitor>

          <Visitor>
            <VisitorLine $gap={4}>
              <Flag country="United States" />
              <Mosaic tone="grey" rows={['0020210', '4133445']} />
            </VisitorLine>
            <VisitorLine $gap={1}>
              <Mosaic tone="pale" rows={['1111141323221213241221', '3433112212222334343321']} />
              <VisitorLink href="#dashboard">com »</VisitorLink>
            </VisitorLine>
            <VisitorLine>
              <VisitorLink href="#dashboard">Dashboard | Clicky</VisitorLink>
            </VisitorLine>
            <VisitorLine>11:19am, 1 action</VisitorLine>
          </Visitor>

          <Visitor>
            <VisitorLine $gap={4}>
              <Flag country="Brazil" />
              <Address>200.228</Address>
              <Mosaic tone="grey" rows={['1231224', '1321331']} />
            </VisitorLine>
            <VisitorLine>
              <VisitorLink href="#analytics">Web Analytics in Real Time | Clicky</VisitorLink>
            </VisitorLine>
            <VisitorLine>11:19am, 1 action</VisitorLine>
          </Visitor>
        </Feed>

        <Log>
          <tbody>
            {log.map(({ time, name, icons, page, source, accent, smudge }, index) => (
              <LogRow key={index}>
                <LogCell $width="117px" $indent={48}>
                  May 7 2015
                  <br />
                  {time}
                </LogCell>
                <LogCell $width="139px">
                  <LogLine $star>
                    <Star />
                    <Mosaic rows={name} />
                  </LogLine>
                  <LogLine $icons>
                    <Flag country={icons[0]} />
                    <SystemIcon name={icons[1]} />
                    <SystemIcon name={icons[2]} />
                  </LogLine>
                </LogCell>
                <LogCell $smudge={smudge}>
                  <LogLine>
                    <Mosaic rows={page} />
                  </LogLine>
                  <LogLine>
                    <Mosaic tone="grey" rows={source} accent={accent} />
                  </LogLine>
                </LogCell>
              </LogRow>
            ))}
          </tbody>
        </Log>
      </Activity>
    </Page>
  </>
);

export default App;
